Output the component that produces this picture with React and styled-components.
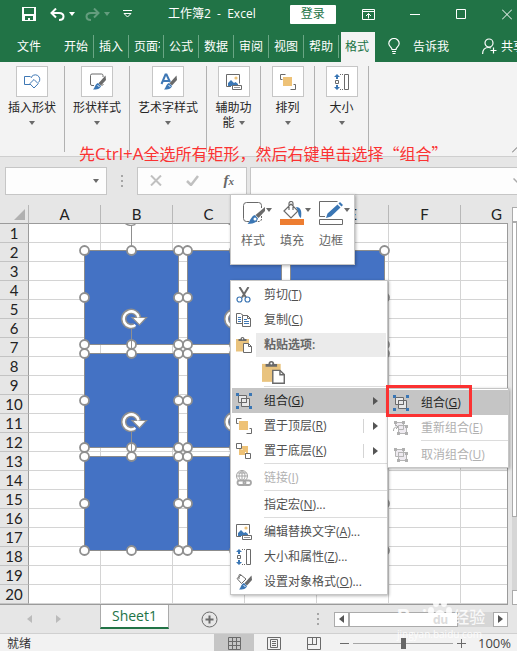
import React, {useState} from "react";
import styled, {createGlobalStyle} from "styled-components";

const GlobalStyle = createGlobalStyle`
  *{
    box-sizing: border-box;
  }
  body{
    margin: 0;
    background-color: #e6e6e6;
    font-family: "Open Sans", "Noto Sans CJK SC", sans-serif;
    font-size: 12px;
    color: #333;
  }
  button, input{
    font-family: inherit;
    font-size: 12px;
    color: inherit;
    margin: 0;
    padding: 0;
  }
  button{
    border: none;
    background-color: transparent;
    white-space: nowrap;
  }
  svg{
    display: block;
    flex-shrink: 0;
  }
`;
const Page = styled.div`
  position: relative;
  width: 100%;
  overflow: hidden;
`;

/* title bar */
const Header = styled.header`
  background-color: #217346;
  color: white;
`;
const TitleBar = styled.div`
  display: flex;
  align-items: center;
  height: 28px;
  padding: 0 5px 0 22px;
`;
const QuickAccess = styled.div`
  display: flex;
  align-items: center;
  width: 146px;
  flex-shrink: 0;
`;
const QuickButton = styled.button`
  display: flex;
  align-items: center;
  gap: 4px;
  margin-right: ${props => props.$gap || 0}px;
  opacity: ${props => props.disabled ? 0.3 : 1};
  color: white;
`;
const Title = styled.h1`
  margin: 0 34px 0 0;
  font-size: 12px;
  font-weight: 400;
  line-height: 20px;
  white-space: pre;
`;
const LoginButton = styled.button`
  width: 46px;
  height: 19px;
  border-radius: 1px;
  background-color: white;
  color: #217346;
  line-height: 18px;
  flex-shrink: 0;
`;
const WindowControls = styled.div`
  flex: 1;
  display: flex;
  justify-content: space-between;
  padding-left: 26px;
  button{
    color: white;
  }
`;

/* ribbon tabs */
const Tabs = styled.nav`
  display: flex;
  align-items: flex-end;
  height: 34px;
  overflow: hidden;
`;
const FileTab = styled.button`
  width: 59px;
  height: 30px;
  padding: 0 1px 2px 0;
  flex-shrink: 0;
`;
const Tab = styled.button`
  position: relative;
  width: ${props => props.$active ? 34 : 35}px;
  height: 30px;
  margin-left: ${props => props.$active ? 2 : 0}px;
  padding: 0 4px 2px ${props => props.$active ? 4 : 5}px;
  text-align: left;
  flex-shrink: 0;
  background-color: ${props => props.$active ? "#f3f3f3" : "transparent"};
  color: ${props => props.$active ? "#217346" : "white"};
  span{
    display: block;
    overflow: hidden;
  }
  &::after{
    content: "";
    position: absolute;
    right: 0;
    top: 3px;
    width: 1px;
    height: 23px;
    background-color: ${props => props.$active ? "transparent" : "#6aa684"};
  }
`;
const TellMe = styled.button`
  display: flex;
  align-items: center;
  gap: 13px;
  height: 30px;
  padding: 0 0 2px 13px;
  flex-shrink: 0;
`;
const ShareButton = styled.button`
  display: flex;
  align-items: center;
  gap: 4px;
  height: 30px;
  margin-left: 33px;
  padding-bottom: 2px;
  flex-shrink: 0;
`;

/* ribbon */
const Ribbon = styled.div`
  display: flex;
  height: 95px;
  padding-top: 4px;
  background-color: #f3f3f3;
  border-bottom: 1px solid #cfcfcf;
`;
const RibbonGroup = styled.button`
  display: flex;
  flex-direction: column;
  align-items: center;
  width: ${props => props.$width}px;
  height: 86px;
  border-right: 1px solid #b1b1b1;
  color: #262626;
  line-height: 16px;
  flex-shrink: 0;
`;
const RibbonIcon = styled.span`
  display: flex;
  align-items: center;
  justify-content: center;
  width: 32px;
  height: 31px;
  margin-bottom: 3px;
  border: 1px solid #c6c6c6;
  background-color: white;
`;
const RibbonMore = styled.span`
  display: flex;
  align-items: center;
  gap: 4px;
  height: 14px;
`;
const CollapseRibbon = styled.button`
  align-self: flex-end;
  margin: 0 -5px 3px auto;
`;
const Caption = styled.p`
  position: absolute;
  left: 79px;
  top: 141px;
  margin: 0;
  font-family: "Noto Sans CJK SC", sans-serif;
  font-size: 16px;
  line-height: 24px;
  white-space: nowrap;
  color: #fb3232;
  span{
    font-family: "Open Sans", sans-serif;
    font-size: 17px;
  }
`;

/* formula bar */
const FormulaBar = styled.div`
  display: flex;
  align-items: center;
  height: 48px;
  padding: 0 0 1px 5px;
`;
const NameBox = styled.div`
  display: flex;
  align-items: center;
  width: 102px;
  height: 28px;
  padding-right: 6px;
  border: 1px solid #c6c6c6;
  background-color: #fdfdfd;
  flex-shrink: 0;
  input{
    flex: 1;
    min-width: 0;
    border: none;
    background-color: transparent;
  }
`;
const Dots = styled.span`
  display: flex;
  flex-direction: column;
  gap: 3px;
  margin-left: ${props => props.$push ? "auto" : "14px"};
  &::before, &::after, i{
    content: "";
    width: 2px;
    height: 2px;
    background-color: #a6a6a6;
  }
`;
const FormulaButtons = styled.div`
  display: flex;
  align-items: center;
  justify-content: space-around;
  width: 110px;
  height: 28px;
  margin: 0 3px 0 14px;
  border: 1px solid #c6c6c6;
  background-color: #fdfdfd;
  flex-shrink: 0;
`;
const FxButton = styled.button`
  font-family: "Liberation Serif", serif;
  font-size: 15px;
  font-style: italic;
  font-weight: 700;
  line-height: 18px;
  color: #666;
  small{
    font-size: 11px;
  }
`;
const FormulaField = styled.div`
  display: flex;
  align-items: center;
  flex: 1;
  height: 28px;
  border: 1px solid #c6c6c6;
  border-right: none;
  background-color: #fdfdfd;
  overflow: hidden;
  input{
    flex: 1;
    min-width: 0;
    border: none;
    background-color: transparent;
  }
  button{
    margin-right: -5px;
  }
`;

/* sheet */
const SheetArea = styled.main`
  display: flex;
`;
const SheetView = styled.div`
  position: relative;
  flex: 1;
  min-width: 0;
  overflow: hidden;
  border-bottom: 1px solid #9b9b9b;
  &::after{
    content: "";
    position: absolute;
    right: 0;
    top: 18px;
    bottom: 0;
    width: 1px;
    background-color: #9b9b9b;
  }
`;
const Grid = styled.table`
  table-layout: fixed;
  width: 533px;
  border-collapse: separate;
  border-spacing: 0;
  font-family: Lato, sans-serif;
  font-size: 15px;
  color: #222;
  th{
    height: 19px;
    padding: 0;
    font-weight: 400;
    line-height: 18px;
    background-color: #e6e6e6;
  }
  thead th{
    border-right: 1px solid #b8b8b8;
    border-bottom: 1px solid #9b9b9b;
  }
  thead th:first-child{
    width: 29px;
  }
  tbody th{
    border-right: 1px solid #9b9b9b;
    border-bottom: 1px solid #c3c3c3;
  }
  td{
    padding: 0;
    border-right: 1px solid #d4d4d4;
    border-bottom: 1px solid #d4d4d4;
    background-color: white;
  }
`;
const SelectAll = styled.button`
  display: block;
  margin: 0 0 0 14px;
`;
const DrawingLayer = styled.div`
  position: absolute;
  left: 29px;
  top: 19px;
  right: 0;
  bottom: 0;
  overflow: hidden;
`;
const Shape = styled.svg`
  position: absolute;
  left: ${props => props.$x}px;
  top: ${props => props.$y}px;
  overflow: visible;
`;
const VerticalScroll = styled.div`
  display: flex;
  flex-direction: column;
  width: 5px;
  margin-left: 4px;
  padding-top: 2px;
  overflow: hidden;
`;
const ScrollButton = styled.button`
  display: flex;
  align-items: center;
  justify-content: center;
  width: 15px;
  height: 15px;
  border: 1px solid #ababab;
  background-color: white;
  flex-shrink: 0;
`;
const ScrollThumb = styled.div`
  flex: ${props => props.$grow};
  border: 1px solid #ababab;
  background-color: white;
`;
const ScrollTrack = styled.div`
  flex: ${props => props.$grow};
  background-color: #d6d6d6;
`;

/* sheet tabs and status bar */
const SheetBar = styled.div`
  display: flex;
  align-items: center;
  height: 28px;
  padding: 0 9px 0 27px;
`;
const NavArrow = styled.button`
  width: 5px;
  margin-right: 24px;
`;
const SheetTab = styled.button`
  align-self: flex-start;
  width: 69px;
  height: 25px;
  margin: -1px 32px 0 15px;
  border: 1px solid #ababab;
  border-top: none;
  border-bottom: 2px solid #217346;
  background-color: white;
  font-size: 14px;
  line-height: 22px;
  color: #217346;
  flex-shrink: 0;
`;
const HorizontalScroll = styled.div`
  display: flex;
  width: 174px;
  height: 15px;
  margin-left: 15px;
`;
const StatusBar = styled.footer`
  display: flex;
  align-items: center;
  height: 19px;
  padding: 0 6px 0 7px;
  border-top: 1px solid #d0d0d0;
  background-color: #f2f2f2;
`;
const ViewButtons = styled.div`
  display: flex;
  margin-left: auto;
`;
const ViewButton = styled.button`
  display: flex;
  align-items: center;
  justify-content: center;
  width: 40px;
  height: 18px;
  background-color: ${props => props.$active ? "#c6c6c6" : "transparent"};
`;
const ZoomBox = styled.div`
  display: flex;
  align-items: center;
  gap: 4px;
  margin-left: 6px;
`;
const ZoomSlider = styled.input`
  appearance: none;
  width: 100px;
  height: 12px;
  background: linear-gradient(#a6a6a6, #a6a6a6) center / 100% 1px no-repeat;
  &::-webkit-slider-thumb{
    appearance: none;
    width: 5px;
    height: 11px;
    background-color: #666;
  }
`;
const ZoomValue = styled.span`
  width: 33px;
  margin-left: 8px;
  font-size: 13px;
  line-height: 16px;
  color: #444;
`;
const Watermark = styled.div`
  position: absolute;
  left: 397px;
  top: 593px;
  color: rgba(255, 255, 255, 0.85);
  pointer-events: none;
  div{
    display: flex;
    align-items: flex-end;
    height: 36px;
    font-family: Inter, "Noto Sans CJK SC", sans-serif;
    font-size: 20px;
    font-weight: 700;
    line-height: 24px;
  }
  b{
    font-size: 16px;
    font-weight: 500;
  }
  p{
    margin: 0;
    font-size: 10px;
    line-height: 10px;
  }
`;

/* popups */
const Popup = styled.div`
  position: absolute;
  left: ${props => props.$x}px;
  top: ${props => props.$y}px;
  width: ${props => props.$width}px;
  padding-top: 1px;
  padding-left: 1px;
  border: 1px solid #c6c6c6;
  background-color: white;
  box-shadow: 1px 1px 3px rgba(0, 0, 0, 0.3);
  color: #505050;
`;
const MiniToolbar = styled(Popup)`
  display: flex;
  height: 71px;
  padding: 4px 0 0 10px;
`;
const MiniButton = styled.button`
  width: 39px;
  text-align: left;
  line-height: 18px;
  color: #666;
  align-self: flex-start;
  flex-shrink: 0;
`;
const MiniIcon = styled.span`
  display: flex;
  align-items: center;
  height: 28px;
  margin-bottom: 5px;
  svg + svg{
    margin: -6px 0 0 1px;
  }
`;
const MenuItem = styled.button`
  display: flex;
  align-items: center;
  width: 100%;
  height: 25px;
  padding-left: 4px;
  text-align: left;
  line-height: 20px;
  background-color: ${props => props.$active ? "#c5c5c5" : "transparent"};
  color: ${props => props.disabled ? "#b1b1b1" : props.$active ? "#262626" : "#505050"};
  &:hover{
    background-color: #c5c5c5;
  }
`;
const MenuIcon = styled.span`
  display: flex;
  width: 28px;
  height: 16px;
`;
const MenuArrow = styled.span`
  display: flex;
  align-items: center;
  height: 14px;
  margin-left: auto;
  padding: 0 9px;
  border-left: 1px solid ${props => props.$split ? "#d4d4d4" : "transparent"};
`;
const MenuHeading = styled.div`
  display: flex;
  align-items: center;
  height: 25px;
  padding-left: 4px;
  h2{
    flex: 1;
    height: 24px;
    margin: 0 1px 0 -8px;
    padding-left: 8px;
    font-size: 12px;
    font-weight: 600;
    line-height: 24px;
    background-color: #ebebeb;
    color: #666;
  }
`;
const PasteButton = styled.button`
  display: block;
  height: 29px;
  padding: 3px 0 2px 30px;
`;
const Separator = styled.hr`
  height: 1px;
  margin: 0 0 1px 32px;
  border: none;
  background-color: #dcdcdc;
`;
const RedFrame = styled.div`
  position: absolute;
  left: 386px;
  top: 385px;
  width: 86px;
  height: 32px;
  border: 3px solid #fb3232;
  pointer-events: none;
`;

const Svg = ({size = 16, w, h, box = "0 0 16 16", children}) => (
    <svg width={w || size} height={h || size} viewBox={box} fill="none" stroke="#6a6a6a" aria-hidden="true">
        {children}
    </svg>
);

const Down = ({color = "#6a6a6a", w = 6}) => (
    <Svg w={w} h={4} box="0 0 6 4"><path d="M0 0h6L3 4z" fill={color} stroke="none"/></Svg>
);
const Right = ({color = "#555"}) => (
    <Svg w={5} h={8} box="0 0 5 8"><path d="M0 0v8l5-4z" fill={color} stroke="none"/></Svg>
);
const Left = ({color = "#555"}) => (
    <Svg w={5} h={8} box="0 0 5 8"><path d="M5 0v8L0 4z" fill={color} stroke="none"/></Svg>
);

const SaveIcon = () => (
    <Svg size={14} box="0 0 14 14">
        <path d="M0 0h14v14H0z" fill="#fff" stroke="none"/>
        <path d="M2 1h10v6H2zM3 9h8v4H8v-2H6v2H3z" fill="#217346" stroke="none"/>
    </Svg>
);
const UndoIcon = ({flip}) => (
    <Svg w={15} h={13} box="0 0 15 13">
        <g transform={flip ? "matrix(-1 0 0 1 15 0)" : undefined} stroke="#fff" strokeWidth="2">
            <path d="M6 .5L1.500 5 6 9.500M2 5h7c3 0 4.500 1.500 4.500 3.500S12 12 9 12"/>
        </g>
    </Svg>
);
const CustomizeIcon = () => (
    <Svg w={9} h={8} box="0 0 9 8"><path d="M0 .5h9M1 3.500h7L4.500 7z" stroke="#fff"/></Svg>
);
const RibbonOptionsIcon = () => (
    <Svg w={13} h={11} box="0 0 13 11">
        <path d="M.5.5h12v10H.5zM0 2.500h13M6.500 9.500v-5M4 7l2.500-2.500L9 7" stroke="#fff"/>
    </Svg>
);
const MinimizeIcon = () => <Svg w={10} h={11} box="0 0 10 11"><path d="M0 5.500h10" stroke="#fff"/></Svg>;
const MaximizeIcon = () => <Svg w={10} h={11} box="0 0 10 11"><path d="M.5 .5h9v9h-9z" stroke="#fff"/></Svg>;
const CloseIcon = () => <Svg w={10} h={11} box="0 0 10 11"><path d="M0 .5l10 10M10 .5l-10 10" stroke="#fff"/></Svg>;
const BulbIcon = () => (
    <Svg w={12} h={17} box="0 0 12 17">
        <path d="M4 11.500C4 9 .8 8.500.8 5.500a5.200 5 0 0 1 10.400 0c0 3-3.200 3.500-3.200 6zM4 13.500h4M4.500 15.500h3" stroke="#fff" strokeWidth="1.200"/>
    </Svg>
);
const PersonIcon = () => (
    <Svg w={15} h={16} box="0 0 15 16">
        <circle cx="7" cy="5" r="4" stroke="#fff" strokeWidth="1.200"/>
        <path d="M.6 16c0-4 2.400-6.500 6-6.500 1 0 1.800.2 2.500.6M11.500 9.500v6M8.500 12.500h6" stroke="#fff" strokeWidth="1.200"/>
    </Svg>
);

const Brush = ({transform}) => (
    <g transform={transform} stroke="none">
        <path d="M15.500 1.500L16 6l-5 5.500-2.500-2.200z" fill="#6a6a6a"/>
        <path d="M8 9l3 3c-1 3-4 3.500-8 3.500C5 14 5 10 8 9z" fill="#3a76b4"/>
        <path d="M7.500 11.500l2 1" stroke="#fff"/>
    </g>
);
const InsertShapeIcon = () => (
    <Svg size={17} box="0 0 17 17">
        <path d="M7.500 11.500H.5v-8h6M7 5a4.500 4.500 0 1 1 7.500 4.500" stroke="#3f78b5"/>
        <path d="M10 6.500l4.200 4.200L10 15l-4.200-4.300z" fill="#fff" stroke="#3f78b5"/>
    </Svg>
);
const ShapeStyleIcon = () => (
    <Svg size={17} box="0 0 17 17">
        <path d="M5 12.500H3a1.500 1.500 0 0 1-1.500-1.500V2.500A1.500 1.500 0 0 1 3 1h9.500A1.500 1.500 0 0 1 14 2.500V4"/>
        <path d="M14 11v1.500h-2" strokeDasharray="1 1"/>
        <Brush transform="translate(1 1)"/>
    </Svg>
);
const StyleIcon = () => (
    <Svg size={24} box="0 0 24 24">
        <path d="M8 20.500H5.500a3 3 0 0 1-3-3v-13a3 3 0 0 1 3-3h12a3 3 0 0 1 3 3V7"/>
        <path d="M20.500 15v3a2.500 2.500 0 0 1-2.500 2.500h-3" strokeDasharray="2 1"/>
        <path d="M24 6v4l-6.500 7-3-3z" fill="#6a6a6a" stroke="none"/>
        <path d="M14 14l3 3.500C16 21.500 12 23 6.500 23c2-1.500 3.500-8 7.500-9z" fill="#3a76b4" stroke="none"/>
        <circle cx="14" cy="18" r="1.500" fill="#fff" stroke="none"/>
    </Svg>
);
const WordArtIcon = () => (
    <Svg size={17} box="0 0 17 17">
        <path d="M1.500 11L5.500 1.500h1L10 9M3 8h6" stroke="#3f78b5" strokeWidth="2"/>
        <Brush transform="translate(1 1)"/>
    </Svg>
);
const PictureIcon = () => (
    <Svg>
        <path d="M5 12.500H.5V.5h13v9"/>
        <path d="M2 11V9l3-3 3 3 1.500-1L12 10v2H2z" fill="#3a76b4" stroke="none"/>
        <circle cx="10" cy="4" r="1.600" fill="#eec277" stroke="none"/>
        <path d="M6.500 11.500h9v4h-9z" fill="#fff"/>
        <path d="M8 13.500h6" stroke="#999"/>
    </Svg>
);
const FrontIcon = () => (
    <Svg>
        <path d="M5.500.5h-5v5h2M10.500 15.500h5v-5h-2"/>
        <path d="M3 3h9v9H3z" fill="#eec277" stroke="none"/>
    </Svg>
);
const BackIcon = () => (
    <Svg>
        <path d="M3 3h9v9H3z" fill="#eec277" stroke="none"/>
        <path d="M.5.5h5v5h-5zM9.500 10.500h5v5h-5z" fill="#fff"/>
        <path d="M6 7v-1M9 9.500h1" stroke="#fff"/>
    </Svg>
);
const SizeIcon = () => (
    <Svg>
        <path d="M10.500.5h4v15h-4z"/>
        <path d="M1.500 6.500h3v3h-3z"/>
        <path d="M6 .5h4M6 15.500h4" strokeDasharray="1 1"/>
        <path d="M3 0l3 3H4v2H2V3H0zM3 16l3-3H4v-2H2v2H0z" fill="#3a76b4" stroke="none"/>
    </Svg>
);
const CutIcon = () => (
    <Svg>
        <path d="M3.500 0L10 10.500M12.500 0L6 10.500" strokeWidth="2"/>
        <circle cx="3.500" cy="12.500" r="2.500" stroke="#3f78b5" strokeWidth="1.200"/>
        <circle cx="11.500" cy="12.500" r="2.500" stroke="#3f78b5" strokeWidth="1.200"/>
    </Svg>
);
const CopyIcon = () => (
    <Svg>
        <path d="M6 11.500H.5v-10h4l3 2"/>
        <path d="M2 5.500h3M2 7.500h3M2 9.500h3" stroke="#3f78b5"/>
        <path d="M6.500 3.500h5l3 3v8h-8zM11.500 3.500v3h3" fill="#fff"/>
        <path d="M8 7.500h3M8 9.500h5M8 11.500h5" stroke="#3f78b5"/>
    </Svg>
);
const PasteIcon = ({size = 16}) => (
    <Svg size={size}>
        <path d="M0 2h13v12.500H0z" fill="#e9c37e" stroke="none"/>
        <path d="M2.500 4V2h2C4.500.8 5.300 0 6.500 0s2 .8 2 2h2v2z" fill="#6a6a6a" stroke="none"/>
        <circle cx="6.500" cy="1.700" r=".7" fill="#fff" stroke="none"/>
        <path d="M7.500 6.500h5l3 3v6h-8z" fill="#fff"/>
        <path d="M12.500 6.500v3h3"/>
    </Svg>
);
const GroupIcon = ({off, re}) => (
    <Svg>
        <path d="M2.500 2.500h8v7h-8zM5.500 5.500h8v8h-8z" stroke={off ? "#b5b5b5" : "#6a6a6a"} fill={off ? "#eeeaf0" : "#fff"} fillOpacity={off ? 1 : 0.6}/>
        {re && <path d="M0 6h5v6H0z" fill="#fff" stroke="none"/>}
        {re && <path d="M.5 11c0-3 1-4 4-4M3 5l2 2-2 2" stroke="#a8a8a8"/>}
        {!re && <path d="M5.500 9.500v-4h5v4z" stroke={off ? "#b5b5b5" : "#6a6a6a"}/>}
        {off
            ? <path d="M1 1h3v3H1zM9 1h3v3H9zM4 12h3v3H4zM12 12h3v3h-3zM12 5h3v3h-3z" fill="#b0b0b0" stroke="none"/>
            : <path d="M0 0h3v3H0zM13 0h3v3h-3zM0 13h3v3H0zM13 13h3v3h-3z" fill="#3a76b4" stroke="none"/>}
    </Svg>
);
const LinkIcon = () => (
    <Svg>
        <g stroke="#a6a6a6">
            <circle cx="6" cy="6" r="5.500"/>
            <path d="M.5 6h11M6 .5v11M1.500 3h9M6 .5C2 4 2 8 6 11.500M6 .5C10 4 10 8 6 11.500"/>
            <rect x="1.500" y="10.500" width="8" height="4.500" rx="2.200" fill="#fff" strokeWidth="1.800"/>
            <rect x="7.500" y="10.500" width="7.500" height="4.500" rx="2.200" strokeWidth="1.800"/>
        </g>
    </Svg>
);
const FormatIcon = () => (
    <Svg>
        <path d="M1 4.500L5 1l5 4-4.500 4.500zM3 5V1.500C3 0 5 0 5 1.500" fill="#fff"/>
        <Brush/>
    </Svg>
);
const FillIcon = () => (
    <Svg size={24} box="0 0 24 24">
        <path d="M0 18h24v6H0z" fill="#ed7d31" stroke="none"/>
        <path d="M4 10l7-7 7 7-7 7zM9 9V2.500a2 2 0 0 1 4 0V9" strokeWidth="1.200"/>
        <path d="M16 6c5 0 6 4 5 11-2-1-3-4-3-7z" fill="#3a76b4" stroke="none"/>
    </Svg>
);
const BorderIcon = () => (
    <Svg size={24} box="0 0 24 24">
        <path d="M6 15.500H.5V.5h18M.5 18.500h23v5H.5z"/>
        <path d="M18.500 3.500l3 3L12 15.500 7 17l1.500-4.500zM19.500 2.500l1.500-1.500 3 3-1.500 1.500z" fill="#3a76b4" stroke="none"/>
    </Svg>
);

const groups = [
    {label: "插入形状", width: 65, icon: <InsertShapeIcon/>},
    {label: "形状样式", width: 65, icon: <ShapeStyleIcon/>},
    {label: "艺术字样式", width: 77, icon: <WordArtIcon/>},
    {label: "辅助功", rest: "能", width: 54, icon: <PictureIcon/>},
    {label: "排列", width: 54, icon: <FrontIcon/>},
    {label: "大小", width: 54, icon: <SizeIcon/>},
];
const tabs = ["开始", "插入", "页面布局", "公式", "数据", "审阅", "视图", "帮助", "格式"];
const columns = ["A", "B", "C", "D", "E", "F", "G"];
const rows = Array.from({length: 20}, (_, i) => i + 1);

const menu = [
    {text: "组合", mnemonic: "G", icon: <GroupIcon/>, arrow: true, active: true},
    {text: "置于顶层", mnemonic: "R", icon: <FrontIcon/>, arrow: true, split: true},
    {text: "置于底层", mnemonic: "K", icon: <BackIcon/>, arrow: true, split: true},
    null,
    {text: "链接", mnemonic: "I", icon: <LinkIcon/>, disabled: true},
    null,
    {text: "指定宏", mnemonic: "N", more: true},
    null,
    {text: "编辑替换文字", mnemonic: "A", more: true, icon: <PictureIcon/>},
    {text: "大小和属性", mnemonic: "Z", more: true, icon: <SizeIcon/>},
    {text: "设置对象格式", mnemonic: "O", more: true, icon: <FormatIcon/>},
];
const submenu = [
    {text: "组合", mnemonic: "G", icon: <GroupIcon/>, active: true},
    {text: "重新组合", mnemonic: "E", icon: <GroupIcon off re/>, disabled: true},
    null,
    {text: "取消组合", mnemonic: "U", icon: <GroupIcon off/>, disabled: true},
];

const Entry = ({item}) => {
    if (!item) {
        return <Separator/>
    }
    return (
        <MenuItem role="menuitem" $active={item.active} disabled={item.disabled}>
            <MenuIcon>{item.icon}</MenuIcon>
            <span>{item.text}(<u>{item.mnemonic}</u>){item.more && "..."}</span>
            {item.arrow && <MenuArrow $split={item.split}><Right/></MenuArrow>}
        </MenuItem>
    )
};

const SIZE = 94;
const BOX = "-0.5 -0.5 94 94";
const handles = [[0, 0], [47, 0], [94, 0], [0, 47], [94, 47], [0, 94], [47, 94], [94, 94]];

const SelectedShape = ({x, y}) => (
    <Shape $x={x} $y={y} width={SIZE} height={SIZE} viewBox={BOX}>
        <rect width={SIZE} height={SIZE} fill="#4472c4" stroke="#8c8c8c"/>
    </Shape>
);
const ShapeHandles = ({x, y}) => (
    <Shape $x={x} $y={y} width={SIZE} height={SIZE} viewBox={BOX} fill="none">
        {handles.map(([cx, cy]) => (
            <circle key={cx + "-" + cy} cx={cx} cy={cy} r="4.500" fill="#fff" stroke="#8f8f8f" strokeWidth="1.800"/>
        ))}
        <path d="M47-26V-4" stroke="#8f8f8f"/>
        <path d="M50-28A7.500 7.500 0 1 1 54-36" stroke="#8f8f8f" strokeWidth="5.500"/>
        <path d="M47.500-36H62L55-28.500z" fill="#fff" stroke="#8f8f8f" strokeWidth="1.200"/>
        <path d="M51-28.500A7.500 7.500 0 1 1 54-36" stroke="#fff" strokeWidth="2.500"/>
    </Shape>
);

const offsets = [0, 103, 206];
const shapes = offsets.flatMap(y => offsets.map(x => ({x: 55 + x, y: 26 + y})));

const App = () => {
    const [activeTab, setActiveTab] = useState("格式");
    const [zoom, setZoom] = useState(100);
    return (
        <Page>
            <GlobalStyle/>
            <Header>
                <TitleBar>
                    <QuickAccess>
                        <QuickButton aria-label="保存" $gap={14}><SaveIcon/></QuickButton>
                        <QuickButton aria-label="撤消" $gap={10}><UndoIcon/><Down color="#fff"/></QuickButton>
                        <QuickButton aria-label="恢复" $gap={13} disabled><UndoIcon flip/><Down color="#fff"/></QuickButton>
                        <QuickButton aria-label="自定义"><CustomizeIcon/></QuickButton>
                    </QuickAccess>
                    <Title>{"工作簿2  -  Excel"}</Title>
                    <LoginButton>登录</LoginButton>
                    <WindowControls>
                        <button aria-label="功能区选项"><RibbonOptionsIcon/></button>
                        <button aria-label="最小化"><MinimizeIcon/></button>
                        <button aria-label="最大化"><MaximizeIcon/></button>
                        <button aria-label="关闭"><CloseIcon/></button>
                    </WindowControls>
                </TitleBar>
                <Tabs>
                    <FileTab>文件</FileTab>
                    {tabs.map(name => (
                        <Tab key={name} $active={name === activeTab} onClick={() => setActiveTab(name)}>
                            <span>{name}</span>
                        </Tab>
                    ))}
                    <TellMe><BulbIcon/>告诉我</TellMe>
                    <ShareButton><PersonIcon/>共享</ShareButton>
                </Tabs>
            </Header>

            <Ribbon>
                {groups.map(group => (
                    <RibbonGroup key={group.label} $width={group.width}>
                        <RibbonIcon>{group.icon}</RibbonIcon>
                        <span>{group.label}</span>
                        <RibbonMore>{group.rest}<Down/></RibbonMore>
                    </RibbonGroup>
                ))}
                <CollapseRibbon aria-label="折叠功能区">
                    <Svg w={10} h={6} box="0 0 10 6"><path d="M0 5.500L5 .5l5 5"/></Svg>
                </CollapseRibbon>
            </Ribbon>

            <FormulaBar>
                <NameBox><input aria-label="名称框"/><Down w={8}/></NameBox>
                <Dots><i/></Dots>
                <FormulaButtons>
                    <button aria-label="取消">
                        <Svg w={12} h={11} box="0 0 12 11"><path d="M1 .5l10 10M11 .5l-10 10" stroke="#c0c0c0" strokeWidth="2"/></Svg>
                    </button>
                    <button aria-label="输入">
                        <Svg w={13} h={11} box="0 0 13 11"><path d="M1 6l4 4 7-9" stroke="#c0c0c0" strokeWidth="2.500"/></Svg>
                    </button>
                    <FxButton aria-label="插入函数">f<small>x</small></FxButton>
                </FormulaButtons>
                <FormulaField>
                    <input aria-label="编辑栏"/>
                    <button aria-label="展开编辑栏">
                        <Svg w={9} h={6} box="0 0 9 6"><path d="M.5 .5l4 4 4-4" stroke="#aaa" strokeWidth="1.500"/></Svg>
                    </button>
                </FormulaField>
            </FormulaBar>

            <SheetArea>
                <SheetView>
                    <Grid>
                        <thead>
                        <tr>
                            <th>
                                <SelectAll aria-label="全选">
                                    <Svg w={11} h={11} box="0 0 11 11"><path d="M11 0v11H0z" fill="#b1b1b1" stroke="none"/></Svg>
                                </SelectAll>
                            </th>
                            {columns.map(name => <th key={name}>{name}</th>)}
                        </tr>
                        </thead>
                        <tbody>
                        {rows.map(row => (
                            <tr key={row}>
                                <th>{row}</th>
                                {columns.map(name => <td key={name}/>)}
                            </tr>
                        ))}
                        </tbody>
                    </Grid>
                    <DrawingLayer>
                        {shapes.map(s => <SelectedShape key={s.x + "-" + s.y} {...s}/>)}
                        {shapes.map(s => <ShapeHandles key={s.x + "-" + s.y} {...s}/>)}
                    </DrawingLayer>
                </SheetView>
                <VerticalScroll>
                    <ScrollButton aria-label="向上"><Down/></ScrollButton>
                    <ScrollThumb $grow={8}/>
                    <ScrollTrack $grow={2}/>
                    <ScrollButton aria-label="向下"><Down/></ScrollButton>
                </VerticalScroll>
            </SheetArea>

            <SheetBar>
                <NavArrow aria-label="上一个"><Left color="#bbb"/></NavArrow>
                <NavArrow aria-label="下一个"><Right color="#bbb"/></NavArrow>
                <SheetTab>Sheet1</SheetTab>
                <button aria-label="新工作表">
                    <Svg size={17} box="0 0 17 17">
                        <circle cx="8.500" cy="8.500" r="7.500"/>
                        <path d="M8.500 4.500v8M4.500 8.500h8" strokeWidth="2"/>
                    </Svg>
                </button>
                <Dots $push><i/></Dots>
                <HorizontalScroll>
                    <ScrollButton aria-label="向左"><Left/></ScrollButton>
                    <ScrollThumb $grow={3}/>
                    <ScrollTrack $grow={1}/>
                    <ScrollButton aria-label="向右"><Right/></ScrollButton>
                </HorizontalScroll>
            </SheetBar>
            <StatusBar>
                <span>就绪</span>
                <ViewButtons>
                    <ViewButton $active aria-label="普通">
                        <Svg w={13} h={13} box="0 0 13 13"><path d="M.5.5h12v12H.5zM4.500 0v13M8.500 0v13M0 4.500h13M0 8.500h13"/></Svg>
                    </ViewButton>
                    <ViewButton aria-label="页面布局">
                        <Svg w={14} h={13} box="0 0 14 13"><path d="M.5.5h13v12H.5zM3.500 2.500h7v8h-7zM5 4.500h4M5 6.500h4M5 8.500h4"/></Svg>
                    </ViewButton>
                    <ViewButton aria-label="分页预览">
                        <Svg w={14} h={13} box="0 0 14 13"><path d="M.5.5h13v12H.5zM5.500 0v7.500M9.500 0v7.500M0 7.500h10"/></Svg>
                    </ViewButton>
                </ViewButtons>
                <ZoomBox>
                    <button aria-label="缩小"><Svg w={9} h={9} box="0 0 9 9"><path d="M0 4.500h9"/></Svg></button>
                    <ZoomSlider type="range" min="0" max="200" aria-label="缩放" value={zoom} onChange={e => setZoom(e.target.value)}/>
                    <button aria-label="放大"><Svg w={9} h={9} box="0 0 9 9"><path d="M0 4.500h9M4.500 0v9"/></Svg></button>
                    <ZoomValue>{zoom}%</ZoomValue>
                </ZoomBox>
            </StatusBar>

            <Caption>先<span>Ctrl+A</span>全选所有矩形，然后右键单击选择“组合”</Caption>

            <MiniToolbar $x={230} $y={194} $width={125}>
                <MiniButton><MiniIcon><StyleIcon/><Down/></MiniIcon>样式</MiniButton>
                <MiniButton><MiniIcon><FillIcon/><Down/></MiniIcon>填充</MiniButton>
                <MiniButton><MiniIcon><BorderIcon/><Down/></MiniIcon>边框</MiniButton>
            </MiniToolbar>

            <Popup role="menu" $x={230} $y={280} $width={158}>
                <Entry item={{text: "剪切", mnemonic: "T", icon: <CutIcon/>}}/>
                <Entry item={{text: "复制", mnemonic: "C", icon: <CopyIcon/>}}/>
                <MenuHeading><MenuIcon><PasteIcon/></MenuIcon><h2>粘贴选项:</h2></MenuHeading>
                <PasteButton aria-label="粘贴"><PasteIcon size={23}/></PasteButton>
                <Separator/>
                {menu.map((item, index) => <Entry key={index} item={item}/>)}
            </Popup>

            <Popup role="menu" $x={387} $y={388} $width={122}>
                {submenu.map((item, index) => <Entry key={index} item={item}/>)}
            </Popup>
            <RedFrame/>

            <Watermark>
                <div>
                    Bai
                    <svg width="26" height="34" viewBox="0 0 26 34" fill="currentColor">
                        <ellipse cx="4" cy="16" rx="3" ry="4"/>
                        <ellipse cx="9" cy="8" rx="3" ry="4"/>
                        <ellipse cx="17" cy="8" rx="3" ry="4"/>
                        <ellipse cx="22" cy="16" rx="3" ry="4"/>
                        <path d="M13 15c4 0 5 4 8 7s3 9-2 9c-3 0-4-1-6-1s-3 1-6 1c-5 0-5-6-2-9s4-7 8-7z"/>
                        <text x="6" y="29" fontSize="12" fill="#dcdcdc">du</text>
                    </svg>
                    <b>经验</b>
                </div>
                <p>jingyan.baidu.com</p>
            </Watermark>
        </Page>
    )
};
export default App;
